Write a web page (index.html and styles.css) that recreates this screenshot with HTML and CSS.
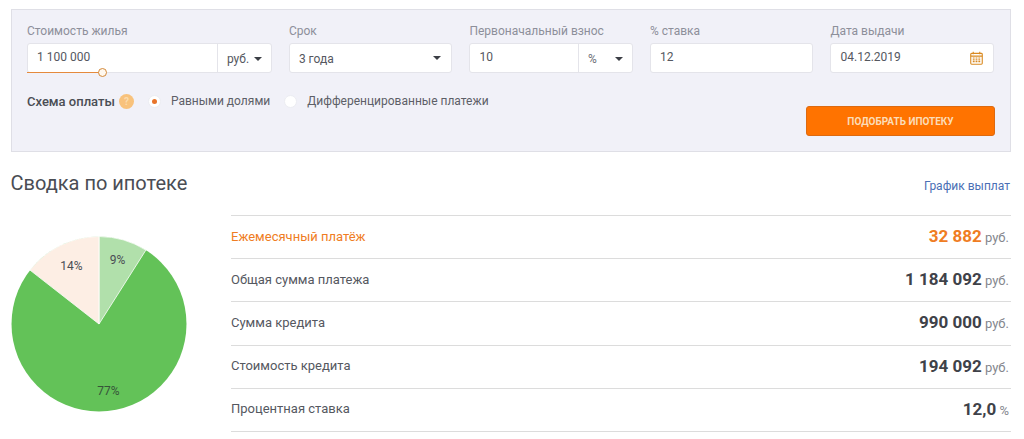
FILE: index.html
```html
<!DOCTYPE html>
<html lang="ru">
<head>
<meta charset="utf-8">
<title>Сводка по ипотеке</title>
<link rel="stylesheet" href="styles.css">
</head>
<body>
<form class="panel">
  <div class="fields">
    <div class="field f1">
      <div class="label">Стоимость жилья</div>
      <div class="box">
        <div class="val grow">1 100 000</div>
        <div class="unit">руб.<span class="caret"></span></div>
      </div>
      <div class="slider"><span class="track"></span><span class="knob"></span></div>
    </div>
    <div class="field f2">
      <div class="label">Срок</div>
      <div class="box"><div class="val grow sel">3 года</div><span class="caret solo"></span></div>
    </div>
    <div class="field f2">
      <div class="label">Первоначальный взнос</div>
      <div class="box">
        <div class="val grow">10</div>
        <div class="unit pct">%<span class="caret"></span></div>
      </div>
    </div>
    <div class="field f2">
      <div class="label">% ставка</div>
      <div class="box"><div class="val grow">12</div></div>
    </div>
    <div class="field f2">
      <div class="label">Дата выдачи</div>
      <div class="box">
        <div class="val grow">04.12.2019</div>
        <svg class="cal" width="13" height="14" viewBox="0 0 14 15" fill="none" stroke="#d98a22" stroke-width="1.2">
          <rect x="0.8" y="2.5" width="12.4" height="11.7" rx="1"/>
          <path d="M0.8 5.5H13.2M3.5 0.8V3.4M10.5 0.8V3.4"/>
          <path d="M3 7.5h2M6 7.5h2M9 7.5h2M3 9.5h2M6 9.5h2M9 9.5h2M3 11.5h2M6 11.5h2M9 11.5h2" stroke-width="1.3"/>
        </svg>
      </div>
    </div>
  </div>
  <div class="lower">
    <div class="scheme">
      <b class="scheme-title">Схема оплаты</b>
      <span class="help">?</span>
      <span class="radio on"></span><span class="radio-text">Равными долями</span>
      <span class="radio"></span><span class="radio-text">Дифференцированные платежи</span>
    </div>
    <button type="button" class="submit">ПОДОБРАТЬ ИПОТЕКУ</button>
  </div>
</form>

<div class="head">
  <h2>Сводка по ипотеке</h2>
  <a href="#" class="link">График выплат</a>
</div>

<div class="summary">
  <div class="chart">
    <svg width="176" height="176" viewBox="-88 -88 176 176">
      <circle r="87.5" fill="#63c258"/>
      <path d="M0 0L0 -87.5A87.5 87.5 0 0 1 46.9 -73.9Z" fill="#b1e0ab" stroke="#fff" stroke-width="0.8"/>
      <path d="M0 0L0 -87.5A87.5 87.5 0 0 0 -69 -53.9Z" fill="#fdeee4" stroke="#fff" stroke-width="0.8"/>
      <text class="pie-label" x="18.5" y="-60.5" text-anchor="middle">9%</text>
      <text class="pie-label" x="-27.5" y="-54.5" text-anchor="middle">14%</text>
      <text class="pie-label dark" x="9.5" y="70.5" text-anchor="middle">77%</text>
    </svg>
  </div>
  <div class="rows">
    <div class="row accent"><span class="name">Ежемесячный платёж</span><span class="amount"><b>32 882</b> <i>руб.</i></span></div>
    <div class="row"><span class="name">Общая сумма платежа</span><span class="amount"><b>1 184 092</b> <i>руб.</i></span></div>
    <div class="row"><span class="name">Сумма кредита</span><span class="amount"><b>990 000</b> <i>руб.</i></span></div>
    <div class="row"><span class="name">Стоимость кредита</span><span class="amount"><b>194 092</b> <i>руб.</i></span></div>
    <div class="row"><span class="name">Процентная ставка</span><span class="amount"><b>12,0</b> <i>%</i></span></div>
  </div>
</div>
</body>
</html>
```
FILE: styles.css
```css
* { box-sizing: border-box; }
html, body { margin: 0; padding: 0; }
body {
  width: 1024px;
  height: 439px;
  overflow: hidden;
  background: #fff;
  font-family: Roboto, "Liberation Sans", sans-serif;
  color: #3b3e45;
}
.panel {
  margin: 9px 13px 0 11px;
  height: 143px;
  padding: 14px 16px 0 15px;
  background: #f1f1f8;
  border: 1px solid #dfdfe6;
}
.fields { display: flex; gap: 17px; }
.field { position: relative; }
.f1 { width: 245px; }
.f2 { width: 163.6px; }
.label {
  height: 19px;
  font-size: 12px;
  line-height: 15px;
  color: #8d8f9a;
}
.box {
  display: flex;
  align-items: center;
  height: 30px;
  background: #fff;
  border: 1px solid #e4e4ea;
  border-radius: 3px;
  font-size: 12px;
  color: #55585f;
}
.val { padding: 0 0 2px 9px; }
.sel { padding: 2px 0 0 9px; }
.grow { flex: 1; }
.unit {
  display: flex;
  align-items: center;
  justify-content: space-between;
  width: 54px;
  height: 100%;
  padding: 2px 9px 0 9px;
  border-left: 1px solid #e4e4ea;
  font-size: 12px;
}
.pct { color: #6d6f76; }
.caret {
  width: 0;
  height: 0;
  border-left: 4px solid transparent;
  border-right: 4px solid transparent;
  border-top: 4px solid #3b3e45;
}
.solo { margin-right: 10px; }
.cal { margin-right: 10px; }
.slider { position: absolute; left: 0; right: 0; top: 48px; }
.track {
  position: absolute;
  left: 0;
  top: 0;
  width: 72px;
  height: 1px;
  background: #e58a3d;
}
.knob {
  position: absolute;
  left: 71px;
  top: -4px;
  width: 9px;
  height: 9px;
  background: #fff8ee;
  border: 1px solid #d3893a;
  border-radius: 50%;
}
.lower { position: relative; }
.scheme {
  display: flex;
  align-items: center;
  height: 20px;
  margin-top: 18px;
  font-size: 12px;
}
.scheme-title { font-size: 13px; font-weight: 500; color: #4a4d54; }
.help {
  display: flex;
  align-items: center;
  justify-content: center;
  width: 15px;
  height: 15px;
  margin: 0 14px 0 4px;
  border-radius: 50%;
  background: #f8c27c;
  color: #fbdcae;
  font-size: 10px;
  font-weight: 700;
}
.radio {
  width: 13px;
  height: 13px;
  margin-right: 10px;
  border-radius: 50%;
  background: #fff;
  border: 1px solid #ecedf2;
  display: flex;
  align-items: center;
  justify-content: center;
}
.radio.on::after {
  content: "";
  width: 5px;
  height: 5px;
  border-radius: 50%;
  background: #e8742a;
}
.radio-text { margin-right: 14px; color: #5d5f67; }
.submit {
  position: absolute;
  right: -1px;
  top: 15px;
  width: 189px;
  height: 30px;
  padding: 0;
  background: #ff7300;
  border: 1px solid #dd6a10;
  border-radius: 3px;
  color: #fbdcb8;
  font-family: inherit;
  font-size: 10px;
  font-weight: 700;
}
.head {
  display: flex;
  justify-content: space-between;
  align-items: center;
  height: 26px;
  margin: 19px 13px 0 10.5px;
}
h2 {
  margin: -2px 0 0;
  font-size: 20px;
  font-weight: 400;
  color: #4a4d54;
}
.link {
  padding: 3px 1px 0 0;
  font-size: 12px;
  color: #4a6fb5;
  text-decoration: none;
}
.summary {
  display: flex;
  margin: 18px 13px 0 11px;
}
.chart { width: 220px; padding-top: 21px; }
.chart svg { display: block; }
.pie-label { font-size: 12px; fill: #4a4d54; }
.pie-label.dark { fill: #37543a; }
.rows {
  flex: 1;
  border-top: 1px solid #dcdcdc;
}
.row {
  display: flex;
  justify-content: space-between;
  align-items: center;
  height: 43.2px;
  padding: 0 2px 2px 0;
  border-bottom: 1px solid #dcdcdc;
  font-size: 13px;
  color: #55585f;
}
.amount b { font-size: 17px; font-weight: 700; color: #3f4249; }
.amount i { font-style: normal; font-size: 13px; color: #85878e; }
.accent .name, .accent .amount b { color: #ef7d23; }
```
